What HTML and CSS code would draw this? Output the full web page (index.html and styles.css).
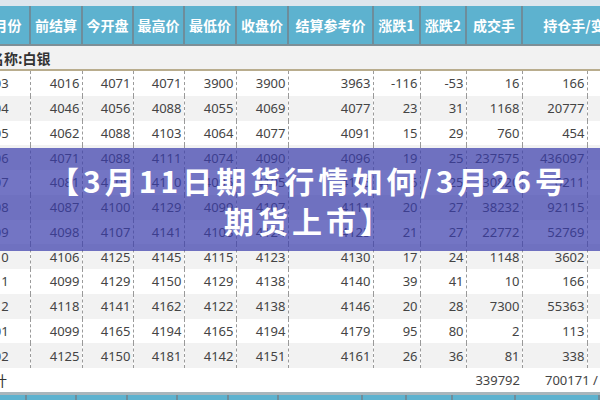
FILE: index.html
```html
<!DOCTYPE html>
<html lang="zh-CN">
<head>
<meta charset="utf-8">
<title>白银期货行情</title>
<link rel="stylesheet" href="styles.css">
</head>
<body>
<div class="page">
  <div class="topstrip"></div>
  <div class="scroller">
    <table class="quotes">
      <colgroup>
        <col class="c-month"><col class="c-n52"><col class="c-n51"><col class="c-n51"><col class="c-n52"><col class="c-n52"><col class="c-ref"><col class="c-d1"><col class="c-d2"><col class="c-vol"><col class="c-oi"><col class="c-chg">
      </colgroup>
      <thead>
        <tr class="head">
          <th>交割月份</th><th>前结算</th><th>今开盘</th><th>最高价</th><th>最低价</th><th>收盘价</th><th>结算参考价</th><th>涨跌1</th><th>涨跌2</th><th>成交手</th><th colspan="2">持仓手/变化</th>
        </tr>
      </thead>
      <tbody>
        <tr class="name"><td colspan="12">品种名称:白银</td></tr>
        <tr><td>1903</td><td>4016</td><td>4071</td><td>4071</td><td>3900</td><td>3900</td><td>3963</td><td>-116</td><td>-53</td><td>16</td><td>166</td><td>-2</td></tr>
        <tr><td>1904</td><td>4046</td><td>4056</td><td>4088</td><td>4055</td><td>4069</td><td>4077</td><td>23</td><td>31</td><td>1168</td><td>20777</td><td>-412</td></tr>
        <tr><td>1905</td><td>4062</td><td>4088</td><td>4103</td><td>4064</td><td>4077</td><td>4091</td><td>15</td><td>29</td><td>760</td><td>454</td><td>6</td></tr>
        <tr><td>1906</td><td>4071</td><td>4088</td><td>4111</td><td>4074</td><td>4090</td><td>4096</td><td>19</td><td>25</td><td>237575</td><td>436097</td><td>-5621</td></tr>
        <tr><td>1907</td><td>4081</td><td>4105</td><td>4110</td><td>4096</td><td>4105</td><td>4115</td><td>16</td><td>25</td><td>30820</td><td>6211</td><td>18</td></tr>
        <tr><td>1908</td><td>4087</td><td>4100</td><td>4129</td><td>4099</td><td>4107</td><td>4111</td><td>20</td><td>27</td><td>38232</td><td>92115</td><td>-733</td></tr>
        <tr><td>1909</td><td>4098</td><td>4107</td><td>4141</td><td>4103</td><td>4124</td><td>4125</td><td>21</td><td>27</td><td>22772</td><td>52769</td><td>1402</td></tr>
        <tr><td>1910</td><td>4106</td><td>4125</td><td>4145</td><td>4115</td><td>4123</td><td>4130</td><td>17</td><td>24</td><td>1148</td><td>3602</td><td>58</td></tr>
        <tr><td>1911</td><td>4099</td><td>4129</td><td>4150</td><td>4129</td><td>4138</td><td>4140</td><td>39</td><td>41</td><td>10</td><td>166</td><td>2</td></tr>
        <tr><td>1912</td><td>4118</td><td>4141</td><td>4162</td><td>4122</td><td>4138</td><td>4146</td><td>20</td><td>28</td><td>7300</td><td>55363</td><td>214</td></tr>
        <tr><td>2001</td><td>4099</td><td>4165</td><td>4194</td><td>4165</td><td>4194</td><td>4179</td><td>95</td><td>80</td><td>2</td><td>113</td><td>0</td></tr>
        <tr><td>2002</td><td>4125</td><td>4150</td><td>4181</td><td>4142</td><td>4151</td><td>4161</td><td>26</td><td>36</td><td>81</td><td>338</td><td>11</td></tr>
        <tr class="total"><td colspan="9" class="total-label">合计</td><td>339792</td><td colspan="2" class="total-oi">700171 / -4124</td></tr>
      </tbody>
    </table>
  </div>
  <div class="nexthead">
    <span class="nh w27"></span><span class="nh w50"></span><span class="nh w51"></span><span class="nh w50"></span><span class="nh w51"></span><span class="nh w50"></span><span class="nh w84"></span><span class="nh w44"></span><span class="nh w46"></span><span class="nh w63"></span><span class="nh w84"></span>
  </div>
  <div class="overlay">
    <h1 class="title">【3月11日期货行情如何/3月26号<br>期货上市】</h1>
  </div>
</div>
</body>
</html>
```

FILE: styles.css
```css
html, body {
  margin: 0;
  padding: 0;
  background: #ffffff;
}

.page {
  position: relative;
  width: 600px;
  height: 400px;
  overflow: hidden;
  font-family: "Noto Sans", "Noto Sans CJK SC", sans-serif;
}

.topstrip {
  height: 6px;
  background: #dde6ed;
}

.scroller {
  width: 600px;
  overflow: hidden;
}

.quotes {
  margin-left: -42px;
  border-collapse: collapse;
  table-layout: fixed;
  width: 682px;
}

.c-month { width: 72px; }
.c-n52 { width: 52px; }
.c-n51 { width: 51px; }
.c-ref { width: 85px; }
.c-d1 { width: 47px; }
.c-d2 { width: 46px; }
.c-vol { width: 56px; }
.c-oi { width: 65px; }
.c-chg { width: 53px; }

.head th {
  height: 38px;
  padding: 0;
  background: #5db2cf;
  color: #ffffff;
  font-family: "Noto Sans CJK SC", sans-serif;
  font-weight: bold;
  font-size: 14px;
  text-align: center;
  white-space: nowrap;
  overflow: hidden;
  border-right: 2px solid #6e8d9b;
  border-bottom: 2px solid #7d8f97;
}

.quotes td {
  height: 24.75px;
  padding: 0 2px 0 0;
  font-size: 13px;
  color: #444444;
  text-align: right;
  white-space: nowrap;
  overflow: hidden;
  border-right: 1px dashed #9a9a9a;
}

.quotes td:first-child {
  text-align: center;
  padding: 0;
}

.quotes tbody tr:nth-child(odd) td {
  background: #f2f2f2;
}

.quotes tbody tr:nth-child(even) td {
  background: #ffffff;
}

.quotes tr.name td {
  height: 23px;
  background: #fef2c4;
  color: #333333;
  font-family: "Noto Sans CJK SC", sans-serif;
  font-weight: bold;
  font-size: 14px;
  text-align: left;
  padding-left: 4px;
  border-right: none;
  border-bottom: 2px solid #b9ad8e;
}

.quotes tr.total td {
  height: 24px;
  background: #ddeef6;
  border-right: none;
  border-bottom: 3px solid #a9b6bc;
}

.quotes tr.total td.total-label {
  text-align: left;
  padding-left: 21px;
  font-family: "Noto Sans CJK SC", sans-serif;
  font-size: 14px;
  color: #333333;
}

.quotes tr.total td.total-oi {
  text-align: left;
  padding-left: 23px;
}

.nexthead {
  display: flex;
  height: 8px;
  background: #5db2cf;
}

.nh {
  flex: none;
  height: 100%;
  border-right: 2px solid #6e8d9b;
}

.w27 { width: 25px; }
.w50 { width: 48px; }
.w51 { width: 49px; }
.w84 { width: 82px; }
.w44 { width: 42px; }
.w46 { width: 44px; }
.w63 { width: 61px; }

.overlay {
  position: absolute;
  left: 0;
  top: 148px;
  width: 600px;
  height: 103px;
  background: rgba(58, 60, 172, 0.71);
  display: flex;
  align-items: center;
  justify-content: center;
}

.title {
  margin: 0;
  padding-left: 18px;
  color: #ffffff;
  font-family: "Noto Sans CJK SC", sans-serif;
  font-weight: bold;
  font-size: 30px;
  line-height: 40px;
  letter-spacing: 4px;
  text-align: center;
}
```
